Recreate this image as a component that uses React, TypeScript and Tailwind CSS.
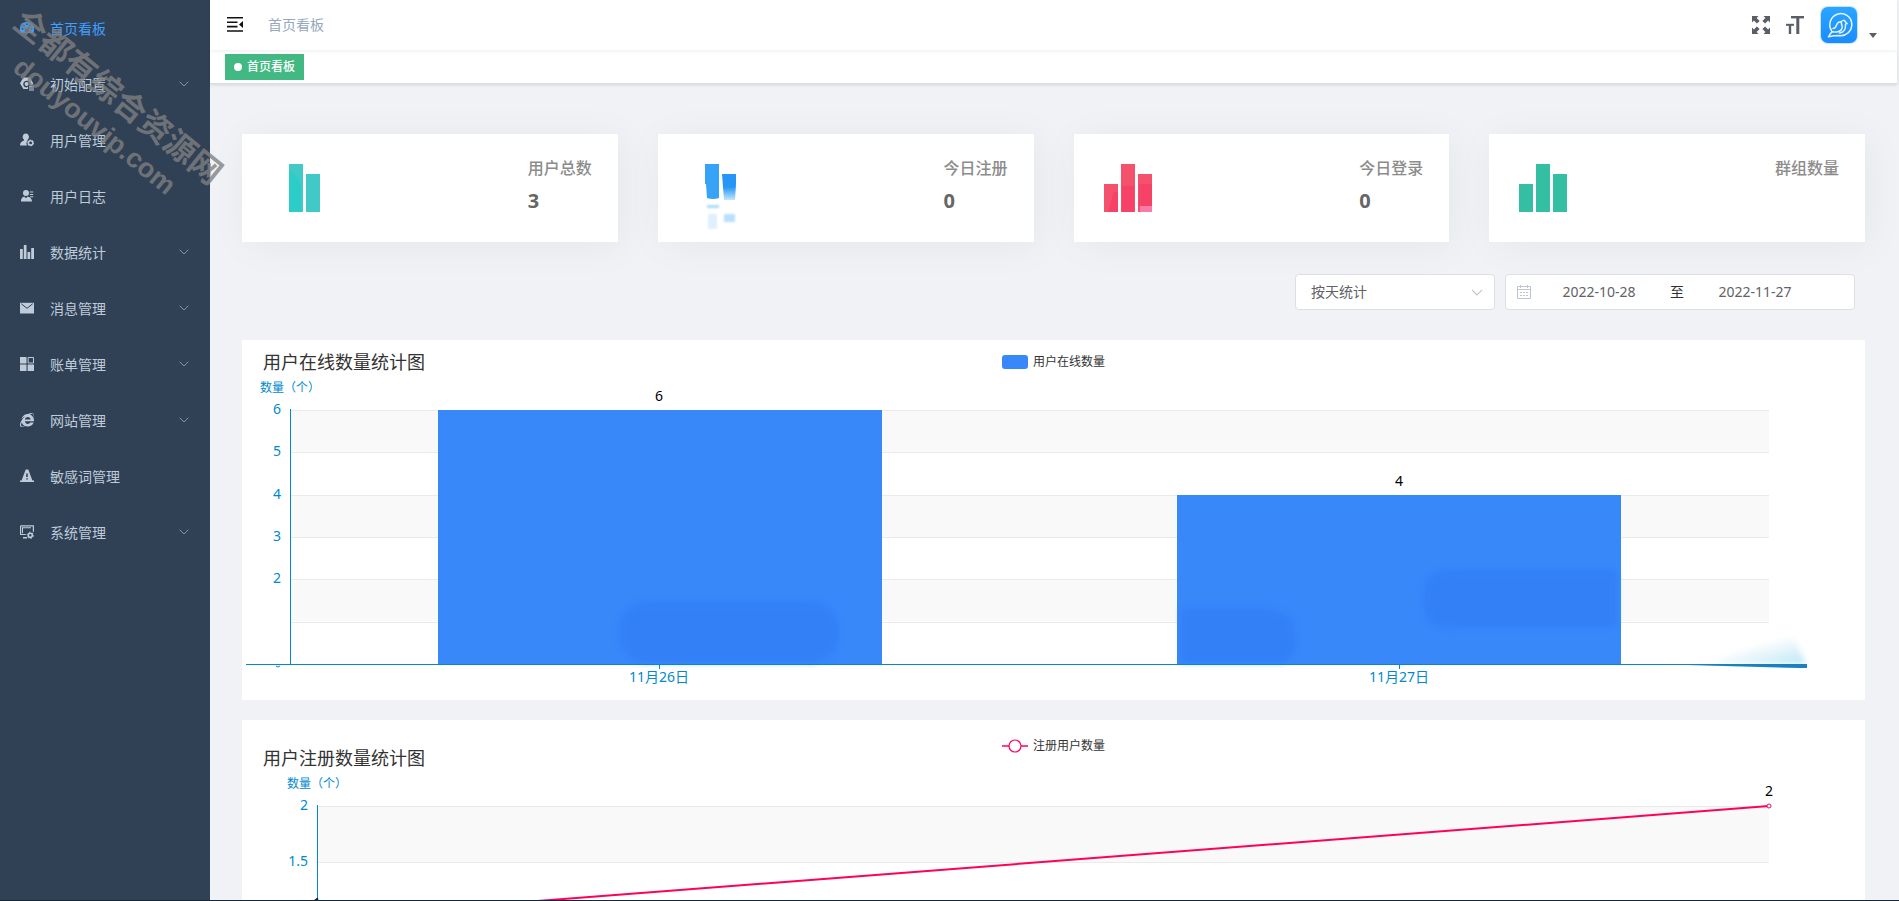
import { useEffect, useRef, useState, type ReactNode } from 'react';
import { FaInternetExplorer } from 'react-icons/fa';

type MenuItem = {
  label: string;
  icon: ReactNode;
  active?: boolean;
  children?: boolean;
};

const Icon = ({ children }: { children: ReactNode }) => (
  <svg className="w-3.5 h-3.5 shrink-0" viewBox="0 0 14 14" fill="currentColor" aria-hidden="true">
    {children}
  </svg>
);

const menuItems: MenuItem[] = [
  {
    label: '首页看板',
    active: true,
    icon: (
      <Icon>
        <path
          fillRule="evenodd"
          d="M7 1a7 7 0 0 0-6 11h12A7 7 0 0 0 7 1zM6.3 2.5h1.4v1.6H6.3zM2.9 4.1l1-.9 1.1 1.2-1 .9zM11.1 4.1l-1-.9L9 5.9l-2 2.2a1.7 1.7 0 1 0 1.4.9l1.2-3zM1.7 7.2h1.6v1.4H1.7zM10.7 7.2h1.6v1.4h-1.6z"
        />
      </Icon>
    ),
  },
  {
    label: '初始配置',
    children: true,
    icon: (
      <Icon>
        <path
          fillRule="evenodd"
          d="M3.4.6h6.4l3.4 5.6-.9 1.7h-2.4a3.4 3.4 0 1 0-3.3 2.6L8 9.6V12H3.4L0 6.3zM6.6 5a2 2 0 1 1 0 4 2 2 0 0 1 0-4z"
        />
        <path d="M9 8.8h5v1H9zM9 10.6h5v1H9zM9 12.4h5v1H9z" />
      </Icon>
    ),
  },
  {
    label: '用户管理',
    icon: (
      <Icon>
        <path d="M5.8.5a3.2 3.4 0 0 1 1.8 6.2v.8c-1.1.9-1.6 3.1-.6 5.1H0c0-3 1.5-4 4-5.1v-.8A3.2 3.4 0 0 1 5.8.5z" />
        <circle cx="10.6" cy="9.9" r="2.2" fill="none" stroke="currentColor" strokeWidth="1.5" />
        <circle cx="10.6" cy="9.9" r="2.9" fill="none" stroke="currentColor" strokeWidth="1" strokeDasharray="1.5 1.5" />
      </Icon>
    ),
  },
  {
    label: '用户日志',
    icon: (
      <Icon>
        <circle cx="6" cy="4" r="3" />
        <path d="M1 12.5C1 9 3 8 4.2 7.6L6 9.3l1.8-1.7C9 8 12 9 12 12.5zM9.8 2.5h3.4v1H9.8zM9.8 4.9h3.4v1H9.8zM10.2 7.3h3v1h-3z" />
      </Icon>
    ),
  },
  {
    label: '数据统计',
    children: true,
    icon: (
      <Icon>
        <path d="M0 4h2.8v10H0zM3.8 0h2.7v14H3.8zM7.5 7h2.7v7H7.5zM11.2 3H14v11h-2.8z" />
      </Icon>
    ),
  },
  {
    label: '消息管理',
    children: true,
    icon: (
      <Icon>
        <path d="M0 1.8h14v10.7H0z" />
        <path d="M1.3 2.8 7 7.3l5.7-4.5" fill="none" stroke="#304156" strokeWidth="1" />
      </Icon>
    ),
  },
  {
    label: '账单管理',
    children: true,
    icon: (
      <Icon>
        <path d="M0 0h6.5v6.5H0zM0 7.6h6.5V14H0zM7.6 7.6H14V14H7.6z" />
        <path d="M8.1.5h5.4V6H8.1z" fill="none" stroke="currentColor" />
      </Icon>
    ),
  },
  { label: '网站管理', children: true, icon: <FaInternetExplorer className="w-3.5 h-3.5 shrink-0" /> },
  {
    label: '敏感词管理',
    icon: (
      <Icon>
        <path fillRule="evenodd" d="M5.7.5h2.6L12.4 11.4H14V13H0v-1.600h1.600zM6.200 4.500v3.500h1.600V4.500zM6.200 9.200v1.400h1.600V9.200z" />
      </Icon>
    ),
  },
  {
    label: '系统管理',
    children: true,
    icon: (
      <Icon>
        <path d="M.6.8h12.8v6M.6.8v8.7h5.2" fill="none" stroke="currentColor" strokeWidth="1.2" />
        <path d="M2 2.2h9v1H3v5H2zM3 12h4v1.4H3z" />
        <circle cx="10.3" cy="10.3" r="2" fill="none" stroke="currentColor" strokeWidth="1.6" />
        <circle cx="10.3" cy="10.3" r="3.1" fill="none" stroke="currentColor" strokeWidth="1" strokeDasharray="1.6 1.6" />
      </Icon>
    ),
  },
];

const ChevronDown = ({ className }: { className: string }) => (
  <svg className={className} viewBox="0 0 10 6" fill="none" stroke="currentColor" aria-hidden="true">
    <path d="M.7.7 5 5 9.3.7" />
  </svg>
);

const statCards = [
  {
    label: '用户总数',
    value: '3',
    bars: (
      <>
        <path fill="#40c9c6" d="M17 0h14v48H17zM34 10h14v38H34z" />
        <path fill="#1fcfca" opacity=".6" d="M17 6q9 6 12 16v26H17z" />
      </>
    ),
  },
  {
    label: '今日注册',
    value: '0',
    bars: (
      <>
        <defs>
          <filter id="smear" x="-20%" y="-20%" width="140%" height="140%">
            <feGaussianBlur stdDeviation="1.2" />
          </filter>
          <linearGradient id="bar-fade" x1="0" y1="0" x2="0" y2="1">
            <stop offset="0.5" stopColor="#2596f5" />
            <stop offset="1" stopColor="#c5e6fc" />
          </linearGradient>
        </defs>
        <path fill="#36a3f7" d="M17 0h14v34q-6 2-12 0l-1-14h-1z" />
        <path fill="url(#bar-fade)" d="M34 10h14v10l-1 16H36z" />
        <g filter="url(#smear)">
          <path fill="#8ed3fa" opacity=".8" d="M19 41h12v3H19z" />
          <path fill="#a5d8fb" opacity=".8" d="M36 50h11v8H36z" />
          <path fill="#d5ecfb" opacity=".8" d="M20 50h9v15h-9z" />
        </g>
      </>
    ),
  },
  {
    label: '今日登录',
    value: '0',
    bars: (
      <>
        <path fill="#f4516c" d="M0 20h14v28H0zM17 0h14v48H17zM34 10h14v38H34z" />
        <path fill="#f53360" opacity=".5" d="M18 22h12v26H18zM35 20h13v22H35zM10 28h4v20H4z" />
        <path fill="#f98fc0" opacity=".7" d="M36 42h12v6H36z" />
      </>
    ),
  },
  {
    label: '群组数量',
    value: '',
    bars: <path fill="#34bfa3" d="M0 20h14v28H0zM17 0h14v48H17zM34 10h14v38H34z" />,
  },
];

const AXIS = '#008acd';
const BAR = '#3888fa';
const LINE = '#ff005a';

// keeps a chart as wide as the box it sits in
function useWidth() {
  const ref = useRef<HTMLDivElement>(null);
  const [width, setWidth] = useState(1200);

  useEffect(() => {
    const el = ref.current;
    if (!el) return;
    const update = () => setWidth(Math.round(el.clientWidth));
    update();
    const observer = new ResizeObserver(update);
    observer.observe(el);
    return () => observer.disconnect();
  }, []);

  return { ref, width };
}

type GridProps = {
  left: number;
  right: number;
  top: number;
  bottom: number;
  labels: string[];
};

// split areas, split lines, y axis and its labels
function Grid({ left, right, top, bottom, labels }: GridProps) {
  const step = (bottom - top) / (labels.length - 1);
  return (
    <g>
      {labels.slice(0, -1).map((_, i) => (
        <rect
          key={i}
          x={left}
          y={Math.round(top + i * step)}
          width={right - left}
          height={Math.round(step)}
          fill={i % 2 ? '#ffffff' : '#f9f9f9'}
        />
      ))}
      {labels.slice(0, -1).map((_, i) => (
        <rect key={i} x={left} y={Math.round(top + i * step)} width={right - left} height={1} fill="#eaeaea" />
      ))}
      <rect x={left} y={top - 1} width={1} height={bottom - top + 1} fill={AXIS} />
      {labels.map((label, i) => (
        <text key={i} x={left - 9} y={Math.round(top + i * step) + 4} textAnchor="end" fontSize={14} fill={AXIS}>
          {label}
        </text>
      ))}
      <text x={left} y={top - 18} textAnchor="middle" fontSize={12} fill={AXIS}>
        数量（个）
      </text>
    </g>
  );
}

const onlineData = [
  { day: '11月26日', value: 6 },
  { day: '11月27日', value: 4 },
];

function OnlineChart() {
  const { ref, width } = useWidth();
  const left = 48;
  const right = width - 96;
  const top = 34;
  const bottom = 288;
  const slot = (right - left) / onlineData.length;

  return (
    <div ref={ref}>
      <svg className="block w-full h-81" role="img" aria-label="用户在线数量统计图">
        <defs>
          <filter id="soft" x="-20%" y="-20%" width="140%" height="140%">
            <feGaussianBlur stdDeviation="3" />
          </filter>
          <linearGradient id="fade" x1="0" y1="0" x2="1" y2="1">
            <stop offset="0.3" stopColor="#d8ecf5" stopOpacity="0.3" />
            <stop offset="1" stopColor="#6fcdec" stopOpacity="0.9" />
          </linearGradient>
        </defs>
        <Grid left={left} right={right} top={top} bottom={bottom} labels={['6', '5', '4', '3', '2', '', '']} />
        {onlineData.map((item, i) => {
          const x = Math.round(left + slot * (i + 0.2));
          const height = Math.round(((bottom - top) * item.value) / 6);
          const center = Math.floor(left + slot * (i + 0.5));
          return (
            <g key={item.day}>
              <rect x={x} y={bottom - height} width={Math.round(slot * 0.6)} height={height} fill={BAR} />
              <text x={center} y={bottom - height - 9} textAnchor="middle" fontSize={14} fill="#000000">
                {item.value}
              </text>
              <rect x={center} y={bottom} width={1} height={5} fill={AXIS} />
              <text x={center} y={bottom + 18} textAnchor="middle" fontSize={14} fill={AXIS}>
                {item.day}
              </text>
            </g>
          );
        })}
        <g fill="#2d78f4" filter="url(#soft)" opacity="0.5">
          <rect x={Math.round(left + slot * 0.445)} y={226} width={220} height={61} rx={28} />
          <path d={`M${Math.round(left + slot * 1.205)} 232h85q30 4 30 28t-14 27h-101z`} />
          <path d={`M${Math.round(left + slot * 1.795)} 194h-160q-34-4-34 29t34 28h160z`} />
        </g>
        <path d={`M${right - 50} 284Q${right + 10} 262 ${width - 70} 264L${width - 59} 288H${right - 50}z`} fill="url(#fade)" filter="url(#soft)" opacity="0.6" />
        <rect x={4} y={bottom} width={width - 62} height={1} fill={AXIS} />
        <path d={`M${right - 120} ${bottom}h158v4h-8z`} fill="#1c80bd" />
        <path d="M34 290q2 2 4 0" fill="none" stroke={AXIS} />
      </svg>
    </div>
  );
}

function RegisterChart() {
  const { ref, width } = useWidth();
  const left = 75;
  const right = width - 96;
  const top = 34;
  const bottom = 258;
  const middle = (top + bottom) / 2;

  return (
    <div ref={ref}>
      <svg className="block w-full h-77" role="img" aria-label="用户注册数量统计图">
        <Grid left={left} right={right} top={top} bottom={bottom} labels={['2', '1.5', '1', '0.5', '0']} />
        <path d={`M${left} ${middle}L${right} ${top}`} fill="none" stroke={LINE} strokeWidth={2} />
        {[
          { x: left, y: middle, value: 1 },
          { x: right, y: top, value: 2 },
        ].map((point) => (
          <g key={point.value}>
            <circle cx={point.x} cy={point.y} r={2} fill="#ffffff" stroke={LINE} />
            <text x={point.x} y={point.y - 10} textAnchor="middle" fontSize={14} fill="#000000">
              {point.value}
            </text>
          </g>
        ))}
      </svg>
    </div>
  );
}

function Sidebar() {
  return (
    <nav className="w-[210px] shrink-0 bg-[#304156] text-sm text-[#bfcbd9]">
      <ul>
        {menuItems.map((item) => (
          <li key={item.label}>
            <a
              href="#"
              className={`flex items-center h-14 pl-5 pr-[21px] ${item.active ? 'text-[#409eff]' : 'hover:bg-[#263445]'}`}
            >
              {item.icon}
              <span className="ml-4 pt-0.5 flex-1">{item.label}</span>
              {item.children && <ChevronDown className="w-2.5 h-1.5 text-[#8b95a2]" />}
            </a>
          </li>
        ))}
      </ul>
    </nav>
  );
}

function Navbar() {
  return (
    <header className="relative flex items-center h-[50px] pl-4 pr-5 bg-white shadow-[0_1px_4px_rgba(0,21,41,0.08)]">
      <button type="button" aria-label="收起菜单" className="mr-6">
        <svg className="w-[18px] h-[18px]" viewBox="0 0 18 18" fill="#111111">
          <path d="M1 1h16v1.600H1zM1 5.400h10.500V7H1zM1 9.800h10.500v1.600H1zM1 14.200h16v1.600H1zM17 5v7l-4-3.500z" />
        </svg>
      </button>
      <span className="text-sm text-[#97a8be]">首页看板</span>
      <div className="ml-auto flex items-center gap-4 text-[#5a5e66]">
        <button type="button" aria-label="全屏">
          <svg className="w-[18px] h-[18px]" viewBox="0 0 18 18" fill="currentColor">
            <path d="M0 0h6.500L4.600 1.900l3 3-2.700 2.700-3-3L0 6.500zM18 0v6.500l-1.900-1.900-3 3-2.700-2.700 3-3L11.500 0zM0 18v-6.500l1.900 1.900 3-3 2.700 2.700-3 3L6.500 18zM18 18h-6.500l1.900-1.900-3-3 2.700-2.700 3 3 1.900-1.900z" />
          </svg>
        </button>
        <button type="button" aria-label="字号">
          <svg className="w-[18px] h-[18px]" viewBox="0 0 18 18" fill="none" stroke="currentColor">
            <path d="M5 1.200h13" strokeWidth="2.400" />
            <path d="M11.800 1v17" strokeWidth="3" />
            <path d="M0 8.800h8" strokeWidth="2" />
            <path d="M4 9v9" strokeWidth="2.400" />
          </svg>
        </button>
        <button type="button" aria-label="账号" className="flex items-end gap-[11px]">
          <svg className="w-[38px] h-[38px]" viewBox="0 0 38 38" fill="none">
            <defs>
              <linearGradient id="avatar" x1="0" y1="0" x2="0" y2="1">
                <stop offset="0" stopColor="#2aa6ff" />
                <stop offset="1" stopColor="#1a8cff" />
              </linearGradient>
            </defs>
            <rect width="38" height="38" rx="8" fill="#c4e4ff" />
            <rect x="1" y="1" width="36" height="36" rx="7" fill="url(#avatar)" />
            <g stroke="#e6f4ff" strokeWidth="1.500" strokeLinecap="round" strokeLinejoin="round">
              <path d="M11.500 24.500A11 11 0 1 1 19 29.500c-4 0-6 .2-10.500 1.300 1-2.300 1.800-3.600 3.500-5" />
              <path d="M12 25.800c5 1 9.500-.5 10.200-4 .4-2-1.200-3.500-.9-5.600.5-2.400 3.600-2.400 4.200-.2l1.600 1.600-1.600.5c.4 5-2 8.400-6 8.900" />
              <path d="M13 22.500c2.800.2 3-2.200 4-4.500.8-1.700 2-2.500 4.200-2.200" />
            </g>
          </svg>
          <svg className="w-2 h-[5px] mb-1.5" viewBox="0 0 8 5" fill="currentColor">
            <path d="M0 0h8L4 5z" />
          </svg>
        </button>
      </div>
    </header>
  );
}

function Filters() {
  return (
    <form className="flex justify-end gap-2.5 mt-8 pr-2.5 text-sm text-[#606266]">
      <div className="relative w-[200px]">
        <select
          aria-label="统计方式"
          className="appearance-none w-full h-9 pl-[15px] pr-8 rounded border border-[#dcdfe6] bg-white"
        >
          <option>按天统计</option>
          <option>按月统计</option>
        </select>
        <ChevronDown className="absolute right-3 top-[15px] w-3 h-[7px] text-[#c0c4cc] pointer-events-none" />
      </div>
      <div className="flex items-center w-[350px] h-9 px-2.5 rounded border border-[#dcdfe6] bg-white">
        <svg className="w-3.5 h-3.5 ml-px shrink-0" viewBox="0 0 14 14" fill="none" stroke="#c0c4cc" aria-hidden="true">
          <path d="M.5 1.500h13v12H.5zM.5 4.500h13M3.500 0v3M10.500 0v3M3 7.500h2M6 7.500h2M9 7.500h2M3 10.500h2M6 10.500h2M9 10.500h2" />
        </svg>
        <input type="text" aria-label="开始日期" defaultValue="2022-10-28" className="w-32 ml-1 text-center outline-none" />
        <span className="w-7 text-center text-[#303133]">至</span>
        <input type="text" aria-label="结束日期" defaultValue="2022-11-27" className="w-32 text-center outline-none" />
      </div>
    </form>
  );
}

export default function App() {
  return (
    <div className="relative flex h-screen overflow-hidden bg-[#f0f2f5] border-b border-[#14283a] font-['Noto_Sans','Noto_Sans_CJK_SC',sans-serif]">
      <Sidebar />

      <div className="flex-1 min-w-0 pr-0.5">
        <Navbar />

        {/* Open tabs */}
        <div className="flex items-center h-[34px] pl-[15px] bg-white border-b border-[#d8dce5] shadow-[0_1px_3px_rgba(0,0,0,0.12)]">
          <a href="#" className="flex items-center gap-[5px] h-[26px] px-[9px] bg-[#42b983] text-xs font-medium text-white">
            <span className="w-2 h-2 rounded-full bg-white" />
            首页看板
          </a>
        </div>

        <main className="px-8 pt-[50px]">
          <section className="grid grid-cols-4 gap-10">
            {statCards.map((card) => (
              <div
                key={card.label}
                className="flex justify-between h-27 pl-[30px] pr-[26px] bg-white shadow-[4px_4px_40px_rgba(0,0,0,0.05)]"
              >
                <svg className="w-[49px] h-[66px] mt-[30px]" viewBox="0 0 49 66" aria-hidden="true">
                  {card.bars}
                </svg>
                <div className="pt-6 font-medium">
                  <div className="text-base leading-5 text-[#8c8c8c]">{card.label}</div>
                  <div className="mt-[11px] text-xl leading-6 font-bold text-[#666666]">{card.value}</div>
                </div>
              </div>
            ))}
          </section>

          <Filters />

          <section className="mt-[30px] bg-white">
            <div className="grid grid-cols-3 pt-2 px-[21px]">
              <h2 className="text-lg leading-7 text-[#333333]">用户在线数量统计图</h2>
              <div className="flex items-center justify-center gap-[5px] h-7 text-xs text-[#333333]">
                <span className="w-[26px] h-3.5 rounded-[3px] bg-[#3888fa]" />
                用户在线数量
              </div>
            </div>
            <OnlineChart />
          </section>

          <section className="mt-5 bg-white">
            <div className="grid grid-cols-3 pt-3 px-[21px]">
              <h2 className="pt-3 text-lg leading-7 text-[#333333]">用户注册数量统计图</h2>
              <div className="flex items-center justify-center gap-[5px] h-7 text-xs text-[#333333]">
                <svg className="w-[26px] h-3.5" viewBox="0 0 26 14" stroke="#ff005a" fill="#ffffff">
                  <path d="M0 7h26" strokeWidth="1.500" />
                  <circle cx="13" cy="7" r="6" strokeWidth="1.200" />
                </svg>
                注册用户数量
              </div>
            </div>
            <RegisterChart />
          </section>
        </main>
      </div>

      {/* Watermark */}
      <div className="absolute -left-[22px] top-[74px] w-64 rotate-39 text-center font-bold whitespace-nowrap text-[#808080]/80 pointer-events-none">
        <div className="text-[32px] leading-9">全都有综合资源网</div>
        <div className="text-[27px] leading-10 font-['Liberation_Sans',sans-serif]">douyouvip.com</div>
      </div>
    </div>
  );
}
